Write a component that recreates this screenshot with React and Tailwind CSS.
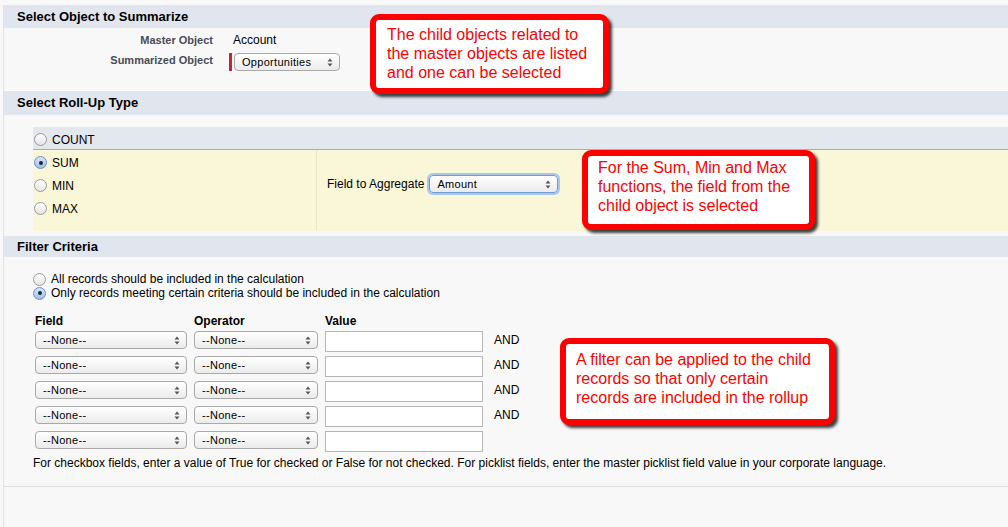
import React from "react";

const F = { fontFamily: '"Liberation Sans", Arial, sans-serif' };

function Arrows() {
  return (
    <svg width="6" height="9" viewBox="0 0 6 9" className="shrink-0">
      <path d="M3 0.5 L5.5 3.5 L0.5 3.5 Z" fill="#555" />
      <path d="M3 8.5 L5.5 5.5 L0.5 5.5 Z" fill="#555" />
    </svg>
  );
}

function Select({ label, w, focus }) {
  return (
    <div
      className={`flex items-center justify-between h-[18px] rounded-[4px] border bg-gradient-to-b from-white to-[#ebebeb] pl-[7px] pr-[6px] text-[11px] text-black ${focus ? "border-[#6e9ad6] shadow-[0_0_0_2px_#a9c6ee]" : "border-[#a9a9a9]"}`}
      style={{ width: w }}
    >
      <span className="leading-none tracking-[0.3px]">{label}</span>
      <Arrows />
    </div>
  );
}

function Radio({ checked }) {
  return (
    <div
      className={`w-[13px] h-[13px] rounded-full border flex items-center justify-center shrink-0 ${checked ? "border-[#6f8fbf] bg-gradient-to-b from-[#d6e6fb] to-[#9fc1ec]" : "border-[#9a9a9a] bg-gradient-to-b from-white to-[#e4e4e4]"}`}
    >
      {checked && <div className="w-[4px] h-[4px] rounded-full bg-[#1b2a3f]" />}
    </div>
  );
}

function Header({ children, h }) {
  return (
    <div className={`${h} flex items-center bg-[#e1e6ee] pl-[13px] text-[13px] font-bold text-black`}>
      {children}
    </div>
  );
}

function Callout({ className, children }) {
  return (
    <div
      className={`absolute border-[6px] border-[#ff0000] rounded-[9px] bg-white shadow-[3px_3px_3px_rgba(0,0,0,0.75)] text-[16px] leading-[19px] text-[#ff0000] ${className}`}
    >
      {children}
    </div>
  );
}

function FilterRow({ and }) {
  return (
    <div className="flex items-start h-[25px]">
      <Select label="--None--" w={152} />
      <div className="ml-[7px]"><Select label="--None--" w={124} /></div>
      <div className="ml-[7px] w-[158px] h-[21px] border border-[#b5b5b5] bg-white" />
      {and && <div className="ml-[11px] mt-[0px] text-[12px] text-black">AND</div>}
    </div>
  );
}

export default function App() {
  return (
    <div className="relative w-[1008px] h-[527px] bg-[#f8f8f8] overflow-hidden pt-[5px] pl-[3px]" style={F}>
      <div className="border-l border-[#e2e2e2] h-full">
        {/* Section 1 */}
        <Header h="h-[23px]">Select Object to Summarize</Header>
        <div className="h-[63px] pt-[5px] border-b border-white">
          <div className="flex items-center h-[14px]">
            <div className="w-[209px] text-right text-[11px] font-bold text-[#4a4a56]">Master Object</div>
            <div className="ml-[20px] text-[12px] text-black">Account</div>
          </div>
          <div className="flex items-start mt-[6px]">
            <div className="w-[209px] text-right text-[11px] font-bold text-[#4a4a56] mt-[-1px]">Summarized Object</div>
            <div className="ml-[16px] w-[3px] h-[18px] bg-[#c0282d]" />
            <div className="ml-[2px]"><Select label="Opportunities" w={106} /></div>
          </div>
        </div>

        {/* Section 2 */}
        <Header h="h-[24px]">Select Roll-Up Type</Header>
        <div className="h-[121px] pt-[12px] pl-[29px]">
          <div className="h-[23px] bg-[#e3e8ef] border-b border-[#a3adbf] flex items-center pl-[1px] pt-[3px]">
            <Radio />
            <span className="ml-[5px] text-[12px] text-black">COUNT</span>
          </div>
          <div className="h-[81px] bg-[#faf6d8] flex">
            <div className="w-[284px] border-r border-[#e9e4c4] pt-[6px] pl-[1px] flex flex-col gap-[10px]">
              <div className="flex items-center h-[13px]"><Radio checked /><span className="ml-[5px] text-[12px] text-black">SUM</span></div>
              <div className="flex items-center h-[13px]"><Radio /><span className="ml-[5px] text-[12px] text-black">MIN</span></div>
              <div className="flex items-center h-[13px]"><Radio /><span className="ml-[5px] text-[12px] text-black">MAX</span></div>
            </div>
            <div className="flex items-center self-start mt-[25px] pl-[10px]">
              <span className="text-[12px] text-black">Field to Aggregate</span>
              <div className="ml-[5px]"><Select label="Amount" w={129} focus /></div>
            </div>
          </div>
        </div>

        {/* Section 3 */}
        <Header h="h-[21px]">Filter Criteria</Header>
        <div className="pl-[29px] pt-[15px]">
          <div className="flex items-center h-[14px]"><Radio /><span className="ml-[5px] text-[12px] text-black">All records should be included in the calculation</span></div>
          <div className="flex items-center h-[14px] mt-[0px]"><Radio checked /><span className="ml-[5px] text-[12px] text-black">Only records meeting certain criteria should be included in the calculation</span></div>
          <div className="flex mt-[15px] text-[12px] font-bold text-black h-[12px] items-center pl-[2px]">
            <div className="w-[159px]">Field</div>
            <div className="w-[131px]">Operator</div>
            <div>Value</div>
          </div>
          <div className="mt-[4px] pl-[2px]">
            <FilterRow and />
            <FilterRow and />
            <FilterRow and />
            <FilterRow and />
            <FilterRow />
          </div>
          <div className="mt-[-2px] text-[12px] text-black">For checkbox fields, enter a value of True for checked or False for not checked. For picklist fields, enter the master picklist field value in your corporate language.</div>
        </div>
        <div className="mt-[14px] border-t border-[#dedede]" />
      </div>

      <Callout className="left-[370px] top-[14px] w-[239px] h-[80px] pl-[11px] pt-[5px]">
        The child objects related to<br />the master objects are listed<br />and one can be selected
      </Callout>
      <Callout className="left-[582px] top-[150px] w-[233px] h-[80px] pl-[10px] pt-[2px]">
        For the Sum, Min and Max<br />functions, the field from the<br />child object is selected
      </Callout>
      <Callout className="left-[560px] top-[338px] w-[275px] h-[87px] pl-[10px] pt-[6px]">
        A filter can be applied to the child<br />records so that only certain<br />records are included in the rollup
      </Callout>
    </div>
  );
}
